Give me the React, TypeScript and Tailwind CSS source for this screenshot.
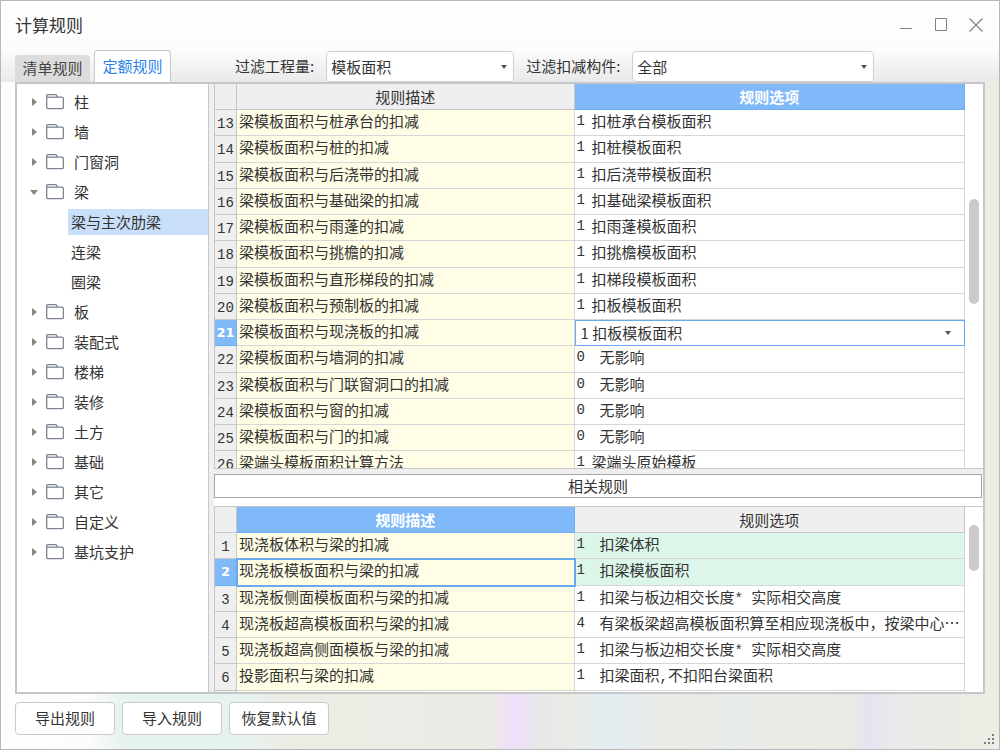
import { useState } from 'react';
import clsx from 'clsx';

type Rule = { id: number; description: string; code: string; option: string };
type TreeNode = { label: string; open?: boolean; children?: string[] };

const TREE: TreeNode[] = [
  { label: '柱' },
  { label: '墙' },
  { label: '门窗洞' },
  { label: '梁', open: true, children: ['梁与主次肋梁', '连梁', '圈梁'] },
  { label: '板' },
  { label: '装配式' },
  { label: '楼梯' },
  { label: '装修' },
  { label: '土方' },
  { label: '基础' },
  { label: '其它' },
  { label: '自定义' },
  { label: '基坑支护' },
];

const RULES: Rule[] = [
  { id: 13, description: '梁模板面积与桩承台的扣减', code: '1', option: '扣桩承台模板面积' },
  { id: 14, description: '梁模板面积与桩的扣减', code: '1', option: '扣桩模板面积' },
  { id: 15, description: '梁模板面积与后浇带的扣减', code: '1', option: '扣后浇带模板面积' },
  { id: 16, description: '梁模板面积与基础梁的扣减', code: '1', option: '扣基础梁模板面积' },
  { id: 17, description: '梁模板面积与雨蓬的扣减', code: '1', option: '扣雨蓬模板面积' },
  { id: 18, description: '梁模板面积与挑檐的扣减', code: '1', option: '扣挑檐模板面积' },
  { id: 19, description: '梁模板面积与直形梯段的扣减', code: '1', option: '扣梯段模板面积' },
  { id: 20, description: '梁模板面积与预制板的扣减', code: '1', option: '扣板模板面积' },
  { id: 21, description: '梁模板面积与现浇板的扣减', code: '1', option: '扣板模板面积' },
  { id: 22, description: '梁模板面积与墙洞的扣减', code: '0', option: '无影响' },
  { id: 23, description: '梁模板面积与门联窗洞口的扣减', code: '0', option: '无影响' },
  { id: 24, description: '梁模板面积与窗的扣减', code: '0', option: '无影响' },
  { id: 25, description: '梁模板面积与门的扣减', code: '0', option: '无影响' },
  { id: 26, description: '梁端头模板面积计算方法', code: '1', option: '梁端头原始模板' },
];

const RELATED: Rule[] = [
  { id: 1, description: '现浇板体积与梁的扣减', code: '1', option: '扣梁体积' },
  { id: 2, description: '现浇板模板面积与梁的扣减', code: '1', option: '扣梁模板面积' },
  { id: 3, description: '现浇板侧面模板面积与梁的扣减', code: '1', option: '扣梁与板边相交长度* 实际相交高度' },
  { id: 4, description: '现浇板超高模板面积与梁的扣减', code: '4', option: '有梁板梁超高模板面积算至相应现浇板中，按梁中心…' },
  { id: 5, description: '现浇板超高侧面模板与梁的扣减', code: '1', option: '扣梁与板边相交长度* 实际相交高度' },
  { id: 6, description: '投影面积与梁的扣减', code: '1', option: '扣梁面积,不扣阳台梁面积' },
];

const MONO = "font-['Liberation_Mono',monospace] text-[14px]";

function MixedText({ text }: { text: string }) {
  return (
    <>
      {text.split(/([\x20-\x7e]+)/).map((part, i) =>
        i % 2 ? (
          <span key={i} className={clsx(MONO, 'whitespace-pre')}>
            {part}
          </span>
        ) : (
          part
        ),
      )}
    </>
  );
}

function Caret({ className }: { className?: string }) {
  return (
    <svg viewBox="0 0 6 4" aria-hidden="true" className={clsx('pointer-events-none absolute top-1/2 h-1 w-1.5 -translate-y-1/2 fill-[#4b5563]', className)}>
      <path d="M0 0h6L3 4z" />
    </svg>
  );
}

function Folder() {
  return (
    <svg viewBox="0 0 18 16" aria-hidden="true" className="h-4 w-[18px] fill-none stroke-[#7c8494]" strokeWidth="1.3">
      <path d="M.7 13V1.8Q.7.7 1.8.7h7.6q.9 0 1.3.8l.6 1.7h4.6q1.5 0 1.5 1.5V13q0 1.6-1.5 1.6H2.2Q.7 14.6.7 13z" />
      <path d="M.9 3.2h10.4" />
    </svg>
  );
}

function TreeArrow({ open }: { open?: boolean }) {
  return (
    <svg viewBox="0 0 8 8" aria-hidden="true" className="mr-2 h-2 w-2 fill-[#858585]">
      {open ? <path d="M0 2h8L4 7z" /> : <path d="M2 0l5 4-5 4z" />}
    </svg>
  );
}

function Tree() {
  const [selected, setSelected] = useState('梁与主次肋梁');
  return (
    <nav aria-label="构件" className="w-[192px] shrink-0 border-r border-[#c8c8c8] bg-white pt-[3px]">
      <ul>
        {TREE.map((node) => (
          <li key={node.label}>
            <button type="button" aria-expanded={!!node.open} className="flex h-[30px] w-full items-center pl-[13px]">
              <TreeArrow open={node.open} />
              <Folder />
              <span className="ml-2.5">{node.label}</span>
            </button>
            {node.open && (
              <ul>
                {node.children?.map((child) => (
                  <li key={child} className="py-0.5 pl-[51px]">
                    <button
                      type="button"
                      onClick={() => setSelected(child)}
                      className={clsx('block h-[26px] w-full pl-[3px] text-left leading-[26px]', child === selected && 'bg-[#c9dff9]')}
                    >
                      {child}
                    </button>
                  </li>
                ))}
              </ul>
            )}
          </li>
        ))}
      </ul>
    </nav>
  );
}

const HEAD = 'h-[26px] border-r border-b p-0 text-center leading-[25px]';
const HEAD_IDLE = 'border-[#c6c6c6] bg-[#efefef] font-normal';
const HEAD_ACTIVE = 'border-[#6fadf0] bg-[#80b9f9] font-bold text-white';
const CELL = 'border-r border-b p-0 align-top';
const CELL_TEXT = 'h-6 overflow-hidden pl-0.5 leading-[22px] whitespace-nowrap';

type RuleTableProps = {
  label: string;
  rows: Rule[];
  activeColumn: 'description' | 'option';
  activeRow: number;
  greenRows?: number[];
  wideCode: (r: Rule) => boolean;
  trailing?: boolean;
};

function RuleTable({ label, rows, activeColumn, activeRow, greenRows = [], wideCode, trailing }: RuleTableProps) {
  return (
    <table aria-label={label} className="w-full table-fixed border-separate border-spacing-0 border-l border-[#c6c6c6]">
      <colgroup>
        <col className="w-[22px]" />
        <col className="w-[45%]" />
        <col />
      </colgroup>
      <thead>
        <tr>
          <td className={clsx(HEAD, HEAD_IDLE)} />
          <th scope="col" className={clsx(HEAD, activeColumn === 'description' ? HEAD_ACTIVE : HEAD_IDLE)}>规则描述</th>
          <th scope="col" className={clsx(HEAD, activeColumn === 'option' ? HEAD_ACTIVE : HEAD_IDLE)}>规则选项</th>
        </tr>
      </thead>
      <tbody>
        {rows.map((r) => {
          const active = r.id === activeRow;
          const editing = active && activeColumn === 'option';
          return (
            <tr key={r.id} className="h-[26px] nth-[4n+2]:h-[27px]">
              <th
                scope="row"
                className={clsx(CELL, 'text-center', active ? 'border-[#6fadf0] bg-[#80b9f9] text-white' : 'border-[#c6c6c6] bg-[#efefef]')}
              >
                <div
                  className={clsx(
                    'h-6 overflow-hidden',
                    active ? "font-['DejaVu_Sans',sans-serif] text-[13px] leading-[26px] font-bold" : clsx(MONO, 'leading-[28px] font-normal'),
                  )}
                >
                  {r.id}
                </div>
              </th>
              <td
                className={clsx(CELL, 'border-[#d6d6d6] bg-[#fffde6]', active && !editing && 'outline-2 -outline-offset-1 outline-[#68aaf0]')}
              >
                <div className={CELL_TEXT}>{r.description}</div>
              </td>
              {editing ? (
                <td className="relative border-r border-b border-[#68aaf0] bg-white p-0 outline-1 -outline-offset-1 outline-[#68aaf0]">
                  <select aria-label={r.description} className="block h-[25px] w-full appearance-none bg-transparent pl-1.5 leading-6 outline-none">
                    <option>{`${r.code} ${r.option}`}</option>
                  </select>
                  <Caret className="right-[13px]" />
                </td>
              ) : (
                <td className={clsx(CELL, 'border-[#d6d6d6]', greenRows.includes(r.id) ? 'bg-[#dcf6ea]' : 'bg-white')}>
                  <div className={clsx(CELL_TEXT, 'flex')}>
                    <span className={clsx(MONO, 'shrink-0', wideCode(r) ? 'w-[23px]' : 'w-[15px]')}>{r.code}</span>
                    <span>
                      <MixedText text={r.option} />
                    </span>
                  </div>
                </td>
              )}
            </tr>
          );
        })}
        {trailing && (
          <tr className="h-[26px]">
            <th scope="row" className="border-r border-[#c6c6c6] bg-[#efefef]" />
            <td className="border-r border-[#d6d6d6] bg-[#fffde6]" />
            <td className="border-r border-[#d6d6d6] bg-white" />
          </tr>
        )}
      </tbody>
    </table>
  );
}

function FilterSelect({ id, label, value, className }: { id: string; label: string; value: string; className: string }) {
  return (
    <div className="flex items-center">
      <label htmlFor={id} className="mr-3">{label}</label>
      <div className={clsx('relative', className)}>
        <select id={id} className="block h-[31px] w-full appearance-none rounded border border-[#cfcfcf] bg-white pl-1 leading-[26px] outline-none">
          <option>{value}</option>
        </select>
        <Caret className="right-[7px]" />
      </div>
    </div>
  );
}

const WINDOW_BUTTON = 'flex h-5 w-5 items-center justify-center';

export default function App() {
  const [tab, setTab] = useState('定额规则');
  return (
    <div
      lang="zh-CN"
      className="flex h-screen flex-col border border-[#b8b8b8] bg-[linear-gradient(to_right,#fefefe_0%,#fbfcfc_9%,#e6f3f1_12%,#e5f2f0_24%,#edede6_28%,#ebebe5_49%,#eee0f8_51%,#eee0f8_52%,#e8e9e7_54%,#e9eae6_57%,#e3edf0_60%,#e4ebee_63%,#eaebe5_66%,#e9eae5_71%,#e6ecec_73%,#eaebe5_77%,#e9eae4_85%,#e6e2f3_87%,#e7eaea_89%,#eaebe5_94%,#eeede5_100%)] font-['Noto_Sans_CJK_SC',sans-serif] text-[15px] text-[#333]"
    >
      <div className="bg-[linear-gradient(to_bottom,#ffffff_0%,#fcfcfc_60%,#e9e9e9f0_100%)] px-3.5">
        <header className="flex h-12 items-center justify-between">
          <h1 className="text-[17px] leading-6">计算规则</h1>
          <div className="flex gap-[15px] text-[#808080]">
            <button type="button" aria-label="最小化" className={WINDOW_BUTTON}>
              <svg viewBox="0 0 14 14" className="h-3.5 w-3.5 fill-none stroke-current"><path d="M1 10.5h12" /></svg>
            </button>
            <button type="button" aria-label="最大化" className={WINDOW_BUTTON}>
              <svg viewBox="0 0 14 14" className="h-3.5 w-3.5 fill-none stroke-current"><path d="M1.5.5h11v12h-11z" /></svg>
            </button>
            <button type="button" aria-label="关闭" className={clsx(WINDOW_BUTTON, '-mr-px')}>
              <svg viewBox="0 0 14 14" className="h-3.5 w-3.5 fill-none stroke-current" strokeWidth="1.2"><path d="M.5.5l13 13M13.5.5l-13 13" /></svg>
            </button>
          </div>
        </header>
        <div className="flex h-[33px] items-end">
          <div role="tablist" className="mr-16 flex items-end gap-1">
            {['清单规则', '定额规则'].map((name) => (
              <button
                key={name}
                type="button"
                role="tab"
                aria-selected={tab === name}
                onClick={() => setTab(name)}
                className={clsx(
                  'rounded-t',
                  tab === name
                    ? 'h-8 w-[77px] border border-b-0 border-[#c4c6cb] bg-white text-[#2b82ec]'
                    : 'h-[27px] w-[75px] bg-[#dcdcdc] text-[#444]',
                )}
              >
                {name}
              </button>
            ))}
          </div>
          <div className="flex gap-3">
            <FilterSelect id="quantity" label="过滤工程量:" value="模板面积" className="w-[188px]" />
            <FilterSelect id="component" label="过滤扣减构件:" value="全部" className="w-[242px]" />
          </div>
        </div>
      </div>

      <main className="mx-3.5 flex min-h-0 flex-1 border-2 border-[#c4c6cb] bg-[#efefef]">
        <Tree />
        <div className="ml-[5px] flex min-w-0 flex-1 flex-col">
          <section className="flex min-h-0 flex-1 overflow-hidden border-b border-[#c6c6c6] bg-white">
            <div className="min-w-0 flex-1">
              <RuleTable
                label="扣减规则"
                rows={RULES}
                activeColumn="option"
                activeRow={21}
                wideCode={(r) => r.code === '0'}
              />
            </div>
            <div className="w-[18px] px-1 pt-[115px]">
              <div className="h-[105px] rounded-full bg-[#cacaca]" />
            </div>
          </section>
          <div className="bg-white">
            <div className="border-t-[5px] border-[#efefef] pr-px">
              <h2 className="border border-[#a6a6a6] text-center leading-[22px]">相关规则</h2>
            </div>
          </div>
          <section className="flex h-[194px] shrink-0 overflow-hidden bg-white pt-2">
            <div className="min-w-0 flex-1 border-t border-[#c6c6c6]">
              <RuleTable
                label="相关规则"
                rows={RELATED}
                activeColumn="description"
                activeRow={2}
                greenRows={[1, 2]}
                wideCode={() => true}
                trailing
              />
            </div>
            <div className="w-[18px] border-t border-[#c6c6c6] px-1 pt-[18px]">
              <div className="h-[46px] rounded-full bg-[#cacaca]" />
            </div>
          </section>
        </div>
      </main>

      <footer className="flex items-start justify-between pt-2 pl-3.5">
        <div className="flex gap-[7px] pb-3.5">
          {['导出规则', '导入规则', '恢复默认值'].map((name) => (
            <button key={name} type="button" className="h-[33px] w-[100px] rounded border border-[#cacaca] bg-white">
              {name}
            </button>
          ))}
        </div>
        <svg viewBox="0 0 11 11" aria-hidden="true" className="mr-1 mb-1 h-[11px] w-[11px] self-end fill-[#777c85]">
          <path d="M8 0h2v2H8zM4 4h2v2H4zM8 4h2v2H8zM0 8h2v2H0zM4 8h2v2H4zM8 8h2v2H8z" />
        </svg>
      </footer>
    </div>
  );
}
